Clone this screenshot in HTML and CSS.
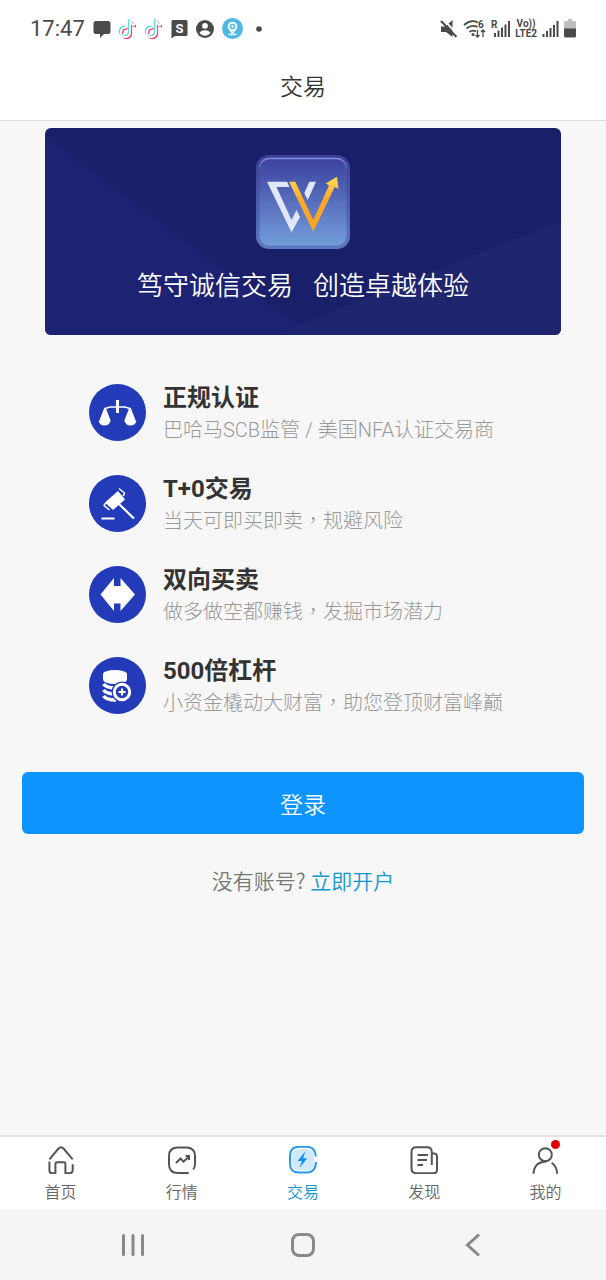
FILE: index.html
```
<!DOCTYPE html>
<html lang="zh-CN">
<head>
    <meta charset="UTF-8">
    <meta name="viewport" content="width=device-width, initial-scale=1.0">
    <title>交易</title>
    <link rel="stylesheet" href="styles.css">
</head>
<body>
    <div class="status-bar">
        <div class="status-left">
            <span class="clock">17:47</span>
            <svg width="18" height="20" viewBox="0 0 18 20"><path d="M3 2h12q2.500 0 2.500 2.500v8q0 2.500-2.500 2.500h-4l-4 4v-4H3Q.5 15 .5 12.500v-8Q.5 2 3 2z" fill="#4a4a4a"/></svg>
            <svg width="18" height="22" viewBox="0 0 18 22">
                <use href="#note" stroke="#45dfe0" x="-1" y="-1"/>
                <use href="#note" stroke="#f0305f" x="1" y="1"/>
                <use href="#note" stroke="#fff"/>
            </svg>
            <svg width="18" height="22" viewBox="0 0 18 22">
                <defs><path id="note" d="M7.500 9.500C3.500 9.500 2 12 2 14.500s2 4.500 4.500 4.500 4.500-2 4.500-4.500V2.500c.5 3 2.500 4.500 5 4.800" fill="none" stroke-width="2.200"/></defs>
                <use href="#note" stroke="#45dfe0" x="-1" y="-1"/>
                <use href="#note" stroke="#f0305f" x="1" y="1"/>
                <use href="#note" stroke="#fff"/>
            </svg>
            <svg width="17" height="20" viewBox="0 0 17 20"><path d="M2 1h13q1.500 0 1.500 1.500v13Q16.500 17 15 17H4l-3.500 2.500v-17Q.5 1 2 1z" fill="#4a4a4a"/><text x="8.500" y="13.500" text-anchor="middle" class="svg-text" font-size="13" fill="#fff">S</text></svg>
            <svg width="18" height="18" viewBox="0 0 18 18"><circle cx="9" cy="9" r="9" fill="#4a4a4a"/><circle cx="9" cy="5.800" r="2.900" fill="#fff"/><path d="M3.500 12.800Q5 10.300 9 10.300t5.500 2.500Q12.500 15.800 9 15.800t-5.500-3z" fill="#fff"/></svg>
            <svg width="21" height="21" viewBox="0 0 21 21"><circle cx="10.500" cy="10.500" r="10.500" fill="#4db8e5"/><circle cx="10.500" cy="8.500" r="3.800" fill="none" stroke="#fff" stroke-width="2"/><circle cx="10.500" cy="8.500" r="1.200" fill="#fff"/><path d="M8 11.500l2.500 4 2.500-4M6.500 16.500h8" fill="none" stroke="#fff" stroke-width="1.500"/></svg>
            <svg class="more-dot" width="6" height="6" viewBox="0 0 6 6"><circle cx="3" cy="3" r="2.800" fill="#4a4a4a"/></svg>
        </div>
        <div class="status-right">
            <svg width="18" height="18" viewBox="0 0 18 18"><path d="M1 6.500h4L12.500 0v17L6 12H1z" fill="#4a4a4a"/><path d="M3-1l16 17" stroke="#fff" stroke-width="2"/><path d="M1 1l15.500 16" stroke="#4a4a4a" stroke-width="2"/></svg>
            <svg width="23" height="20" viewBox="0 0 23 20">
                <path d="M1 6Q8 0 15 3.500M3.500 9.500Q9 5 14.500 8M6.500 13Q9.500 10.500 13 12.500" fill="none" stroke="#4a4a4a" stroke-width="1.700"/>
                <circle cx="10" cy="15.500" r="1.500" fill="#4a4a4a"/>
                <path d="M14.500 11v7m-2-2l2 2 2-2M20 18v-7m-2 2l2-2 2 2" fill="none" stroke="#4a4a4a" stroke-width="1.300"/>
                <text x="15" y="8.500" class="svg-text" font-size="10" fill="#4a4a4a">6</text>
            </svg>
            <svg width="19" height="20" viewBox="0 0 19 20"><text x="0" y="8.500" class="svg-text" font-size="10" fill="#4a4a4a">R</text><path d="M4 18v-4M7.500 18v-6.500M11 18V8.500M14.500 18V5.500M18 18V2" stroke="#4a4a4a" stroke-width="2"/></svg>
            <span class="volte">Vo))<br>LTE2</span>
            <svg width="17" height="20" viewBox="0 0 17 20"><path d="M1.500 18v-3M5 18v-6M8.500 18V9M12 18V6M15.500 18V2" stroke="#4a4a4a" stroke-width="2"/></svg>
            <svg width="12" height="19" viewBox="0 0 12 19"><path d="M4 0h4v2h2.500Q12 2 12 3.500V10H0V3.500Q0 2 1.500 2H4z" fill="#bdbdbd"/><path d="M0 9.500h12V17q0 1.500-1.500 1.500h-9Q0 18.500 0 17z" fill="#4a4a4a"/></svg>
        </div>
    </div>

    <header class="header">
        <h1>交易</h1>
    </header>

    <main class="content">
        <section class="banner">
            <svg class="banner-bg" viewBox="0 0 516 207" preserveAspectRatio="none">
                <path d="M0 8L252 197L238 207H0z" fill="#1e2272"/>
                <path d="M516 93L252 197L238 207H516z" fill="#20256f"/>
            </svg>
            <svg class="logo" viewBox="0 0 94 94">
                <defs>
                    <linearGradient id="tile" x1="0" y1="0" x2="0" y2="1"><stop offset="0" stop-color="#3c419f"/><stop offset="1" stop-color="#739cda"/></linearGradient>
                    <linearGradient id="edge" x1="0" y1="0" x2="0" y2="1"><stop offset="0" stop-color="#3c3f94"/><stop offset="1" stop-color="#5b7ac0"/></linearGradient>
                    <linearGradient id="shine" x1="0" y1="0" x2="0" y2="1"><stop offset="0" stop-color="#858ce0"/><stop offset=".15" stop-color="#858ce0" stop-opacity="0"/></linearGradient>
                    <linearGradient id="gold" x1="0" y1="1" x2="0" y2="0"><stop offset="0" stop-color="#f8a326"/><stop offset=".6" stop-color="#fbaa2b"/><stop offset="1" stop-color="#ffe05a"/></linearGradient>
                </defs>
                <rect width="94" height="94" rx="13" fill="url(#edge)"/>
                <rect x="3.500" y="3.500" width="87" height="87" rx="10" fill="url(#tile)" stroke="url(#shine)" stroke-width="1.500"/>
                <path d="M11 26.700h20l2.500 5.300h-13l15 33 5-10 3.500 7-8.500 15.300zM53.300 26.700H60L51.700 45l-3.400-6.700z" fill="#e2e6ff"/>
                <path d="M33 26.700h6.300l18 38.300L73 30.500l-3.300-2L81 21.700 82.500 34l-3.800-2-21.400 44.700z" fill="url(#gold)"/>
            </svg>
            <p class="slogan"><span>笃守诚信交易</span><span>创造卓越体验</span></p>
        </section>

        <ul class="features">
            <li class="feature">
                <svg class="feature-icon" viewBox="0 0 57 57">
                    <circle cx="28.500" cy="28.500" r="28.500" fill="#233bb8"/>
                    <path d="M16 24.500l5-1.500h15l5 1.500M16 24l-5 13M16 24l5 13M41 24l-5 13M41 24l5 13" fill="none" stroke="#fff" stroke-width="1.500"/>
                    <path d="M14.500 27h3l3.500 10h.5q-1.500 4.500-6 4.500T9.500 37h1.500zM39.500 27h3L46 37h1.500q-1.500 4.500-6 4.500t-6-4.500h.5z" fill="#fff"/>
                    <path d="M28.500 16v13" stroke="#fff" stroke-width="3"/>
                </svg>
                <div class="feature-text">
                    <h2>正规认证</h2>
                    <p lang="zh-TW">巴哈马SCB监管 / 美国NFA认证交易商</p>
                </div>
            </li>
            <li class="feature">
                <svg class="feature-icon" viewBox="0 0 57 57">
                    <circle cx="28.500" cy="28.500" r="28.500" fill="#233bb8"/>
                    <path d="M16 27.500L29 16l7 8.500L24 35z" fill="#fff"/>
                    <path d="M30 13.500l6 5M34 21l1.500-2.500M14.500 30l6 5M17 28l-2 2" fill="none" stroke="#fff" stroke-width="1.500"/>
                    <path d="M12.500 43.500h13M30 29l15 14.500" stroke="#fff" stroke-width="2.200"/>
                </svg>
                <div class="feature-text">
                    <h2>T+0交易</h2>
                    <p lang="zh-TW">当天可即买即卖，规避风险</p>
                </div>
            </li>
            <li class="feature">
                <svg class="feature-icon" viewBox="0 0 57 57">
                    <circle cx="28.500" cy="28.500" r="28.500" fill="#233bb8"/>
                    <path d="M11.500 28.500L25 12v8h6.500v-8L46 28.500 31.500 45v-7.500H25V45z" fill="#fff"/>
                </svg>
                <div class="feature-text">
                    <h2>双向买卖</h2>
                    <p lang="zh-TW">做多做空都赚钱，发掘市场潜力</p>
                </div>
            </li>
            <li class="feature">
                <svg class="feature-icon" viewBox="0 0 57 57">
                    <circle cx="28.500" cy="28.500" r="28.500" fill="#233bb8"/>
                    <path d="M14 17v6q2 4 12 4t12-4v-6z" fill="#fff"/>
                    <ellipse cx="26" cy="17" rx="12" ry="4" fill="#fff"/>
                    <path d="M14.500 27q3 4 12.500 4M14.500 33q3 4 12.500 4M14.500 39q3 4 12.500 4" fill="none" stroke="#fff" stroke-width="3.500"/>
                    <circle cx="33" cy="35" r="10.500" fill="#233bb8"/>
                    <circle cx="33" cy="35" r="7.700" fill="none" stroke="#fff" stroke-width="3"/>
                    <path d="M33 31.500v7M29.500 35h7" stroke="#fff" stroke-width="2"/>
                </svg>
                <div class="feature-text">
                    <h2>500倍杠杆</h2>
                    <p lang="zh-TW">小资金橇动大财富，助您登顶财富峰巅</p>
                </div>
            </li>
        </ul>

        <button type="button" class="login-btn">登录</button>
        <p class="signup">没有账号? <a href="#">立即开户</a></p>
    </main>

    <nav class="tabs">
        <a href="#" class="tab">
            <svg viewBox="0 0 28 28"><path d="M2.400 13.300L11.500 2.500q2.500-2.400 5 0l9.200 10.800M2.400 15.500v9q0 2.800 3 2.800h3V18q0-1.700 1.700-1.700h6.600q1.700 0 1.700 1.700v9.300h3.300q4 0 4-3.300v-5.700"/></svg>
            首页
        </a>
        <a href="#" class="tab">
            <svg viewBox="0 0 28 28"><path d="M20.700 27H10Q1 27 1 18v-8Q1 1.500 10 1.500h8Q27 1.500 27 10v8q0 3-1.800 5.500"/><path d="M8 17l4.500-4.500 3 3.200L21 10.500M17.500 10H21v4"/></svg>
            行情
        </a>
        <a href="#" class="tab active">
            <svg viewBox="0 0 28 28"><path d="M10 3h7Q25 3 25 10v7q0 7.500-7.500 7.500h-7Q3 24.500 3 17v-7Q3 3 10 3z" fill="#cfe8fc" stroke="none"/><path d="M26.800 10.500Q26.500.8 17.500.8H10Q1 .8 1 10v7.500Q1 26.500 10 26.500h8q8.500 0 9-10.500"/><path d="M16.700 4.700L8.700 15H13l-2.700 7 8-9.700H14z" fill="#118ee9" stroke="none"/></svg>
            交易
        </a>
        <a href="#" class="tab">
            <svg viewBox="0 0 28 28"><path d="M21.800 19V6q0-4.700-4.700-4.700H6.200Q1.500 1.300 1.500 6v16.500q0 4.700 4.700 4.700h17.500q3.300 0 3.300-3.500V10.500q0-3-3-3h-2M7.500 9H18M7.500 14H17M7.500 19h5.500"/></svg>
            发现
        </a>
        <a href="#" class="tab">
            <svg viewBox="0 0 28 28"><circle cx="14.300" cy="8.700" r="6.500"/><path d="M2.500 27.700Q3 16 15.500 15.500M20.600 16.700q5.500 3.800 5.500 11"/></svg>
            我的
            <span class="badge"></span>
        </a>
    </nav>

    <div class="system-nav">
        <button type="button" aria-label="最近任务"><svg viewBox="0 0 24 24"><path d="M2.500 2.500v19M12 2.500v19M21.500 2.500v19" stroke-linecap="round"/></svg></button>
        <button type="button" aria-label="主屏幕"><svg viewBox="0 0 24 24"><rect x="1.500" y="1.500" width="21" height="21" rx="6.500"/></svg></button>
        <button type="button" aria-label="返回"><svg viewBox="0 0 24 24"><path d="M18 1.500L6.500 12 18 22.500"/></svg></button>
    </div>
</body>
</html>
```
FILE: styles.css
```
* {
    margin: 0;
    padding: 0;
    box-sizing: border-box;
}

body {
    display: flex;
    flex-direction: column;
    min-height: 100vh;
    background: #f7f7f7;
    font-family: 'Noto Sans CJK SC', sans-serif;
    font-weight: 350;
    color: #333;
}

a {
    text-decoration: none;
}

button {
    border: none;
    background: none;
    font-family: inherit;
    font-weight: inherit;
    cursor: pointer;
}

svg {
    flex-shrink: 0;
}

/* phone status bar */
.status-bar {
    display: flex;
    justify-content: space-between;
    align-items: center;
    height: 57px;
    padding: 0 30px;
    background: #fff;
}

.status-left,
.status-right {
    display: flex;
    align-items: center;
    gap: 8px;
}

.status-right {
    gap: 5px;
}

.clock {
    font-family: Roboto, sans-serif;
    font-size: 22px;
    font-weight: 400;
    color: #4a4a4a;
}

.more-dot {
    margin-left: 5px;
}

.svg-text {
    font-family: Roboto, sans-serif;
    font-weight: bold;
}

.volte {
    font-family: Roboto, sans-serif;
    font-size: 10px;
    font-weight: bold;
    line-height: 10px;
    text-align: center;
    color: #4a4a4a;
}

.header {
    display: flex;
    justify-content: center;
    align-items: center;
    height: 64px;
    background: #fff;
    border-bottom: 1px solid #ddd;
}

.header h1 {
    font-size: 23px;
    font-weight: inherit;
    line-height: 32px;
    margin-bottom: 8px;
}

.content {
    flex: 1;
    padding: 7px 22px 20px;
}

.banner {
    position: relative;
    display: flex;
    flex-direction: column;
    align-items: center;
    margin: 0 23px;
    padding: 27px 0 31px;
    border-radius: 6px;
    background: #1a1f6a;
    overflow: hidden;
}

.banner-bg {
    position: absolute;
    inset: 0;
    width: 100%;
    height: 100%;
}

.logo {
    position: relative;
    width: 94px;
    height: 94px;
}

.slogan {
    position: relative;
    display: flex;
    gap: 20px;
    margin-top: 15px;
    font-size: 26px;
    line-height: 40px;
    color: #fff;
}

.features {
    display: flex;
    flex-direction: column;
    gap: 23px;
    margin: 43px 0 53px 67px;
    list-style: none;
}

.feature {
    display: flex;
    align-items: center;
    gap: 17px;
}

.feature-icon {
    width: 57px;
    height: 57px;
}

.feature-text {
    padding-top: 4px;
}

.feature-text h2 {
    font-family: Roboto, 'Noto Sans CJK SC', sans-serif;
    font-size: 24px;
    font-weight: bold;
    line-height: 32px;
}

.feature-text p {
    font-family: Roboto, 'Noto Sans CJK TC', sans-serif;
    font-size: 20px;
    font-weight: 300;
    line-height: 32px;
    color: #999;
}

.login-btn {
    display: block;
    width: 100%;
    height: 62px;
    border-radius: 6px;
    background: #0d94ff;
    font-size: 23px;
    color: #fff;
}

.signup {
    margin-top: 30px;
    text-align: center;
    font-size: 21px;
    line-height: 32px;
    color: #777;
}

.signup a {
    color: #1296cf;
}

.tabs {
    display: flex;
    height: 74px;
    border-top: 2px solid #e2e2e2;
    background: #fff;
}

.tab {
    position: relative;
    flex: 1;
    display: flex;
    flex-direction: column;
    align-items: center;
    padding-top: 9px;
    font-size: 16px;
    line-height: 24px;
    color: #666;
}

.tab svg {
    width: 28px;
    height: 28px;
    margin-bottom: 5px;
    fill: none;
    stroke: #555;
    stroke-width: 2;
}

.tab.active {
    color: #1296cf;
}

.tab.active svg {
    stroke: #2b97e8;
}

/* unread dot over the profile icon */
.badge {
    position: absolute;
    top: 3px;
    left: 50%;
    width: 9px;
    height: 9px;
    margin-left: 6px;
    border-radius: 50%;
    background: #e00000;
}

.system-nav {
    display: flex;
    height: 71px;
    padding: 0 8%;
    background: #f5f5f5;
}

.system-nav button {
    flex: 1;
}

.system-nav svg {
    width: 24px;
    height: 24px;
    fill: none;
    stroke: #888;
    stroke-width: 3;
    vertical-align: middle;
}
```
